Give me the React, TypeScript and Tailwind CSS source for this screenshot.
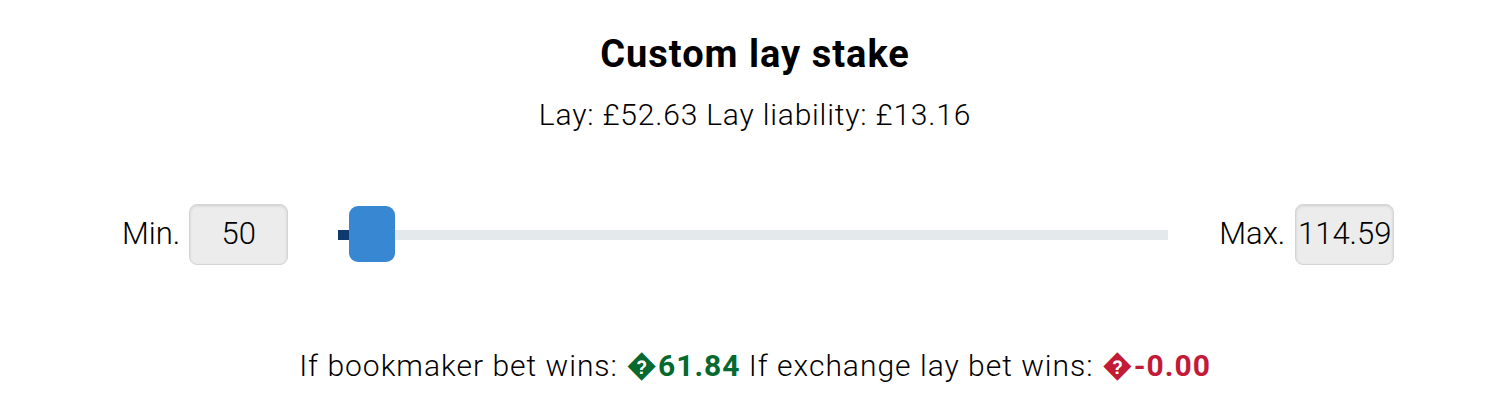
export default function App() {
  return (
    <div className="w-[1488px] h-[420px] bg-white text-black font-['Roboto','Liberation_Sans',sans-serif]">
      <div className="pl-[22px]">
        <h2 className="pt-[32px] text-center text-[38px] leading-[44px] font-bold tracking-[1px]">Custom lay stake</h2>
        <p className="mt-[21px] text-center text-[30px] leading-[36px] font-light tracking-[0.8px]">
          Lay: £52.63 Lay liability: £13.16
        </p>
      </div>

      <div className="mt-[71px] flex items-center h-[61px] pl-[122px]">
        <span className="text-[31px] font-light">Min.</span>
        <div className="ml-[9px] w-[99px] h-[61px] rounded-[8px] border border-[#d4d4d4] bg-[#ececec] shadow-[inset_0_1px_3px_rgba(0,0,0,0.12)] flex items-center justify-center text-[31px] font-light">
          50
        </div>

        <div className="relative ml-[50px] w-[830px] h-[61px] flex items-center">
          <div className="w-full h-[10px] bg-[#e4eaec] flex">
            <div className="w-[14px] h-full bg-[#0e3a6f]" />
          </div>
          <div className="absolute left-[11px] top-[2px] w-[46px] h-[56px] rounded-[9px] bg-[#3787d2]" />
        </div>

        <span className="ml-[51px] text-[31px] font-light">Max.</span>
        <div className="ml-[10px] w-[99px] h-[61px] rounded-[8px] border border-[#d4d4d4] bg-[#ececec] shadow-[inset_0_1px_3px_rgba(0,0,0,0.12)] flex items-center justify-center text-[31px] font-light whitespace-nowrap">
          114.59
        </div>
      </div>

      <p className="mt-[83px] pl-[22px] text-center text-[30px] leading-[36px] font-light tracking-[1px]">
        If bookmaker bet wins: <span className="font-bold text-[#06692f]">{"\uFFFD"}61.84</span> If exchange lay bet wins:{" "}
        <span className="font-bold text-[#c21a37]">{"\uFFFD"}-0.00</span>
      </p>
    </div>
  );
}
